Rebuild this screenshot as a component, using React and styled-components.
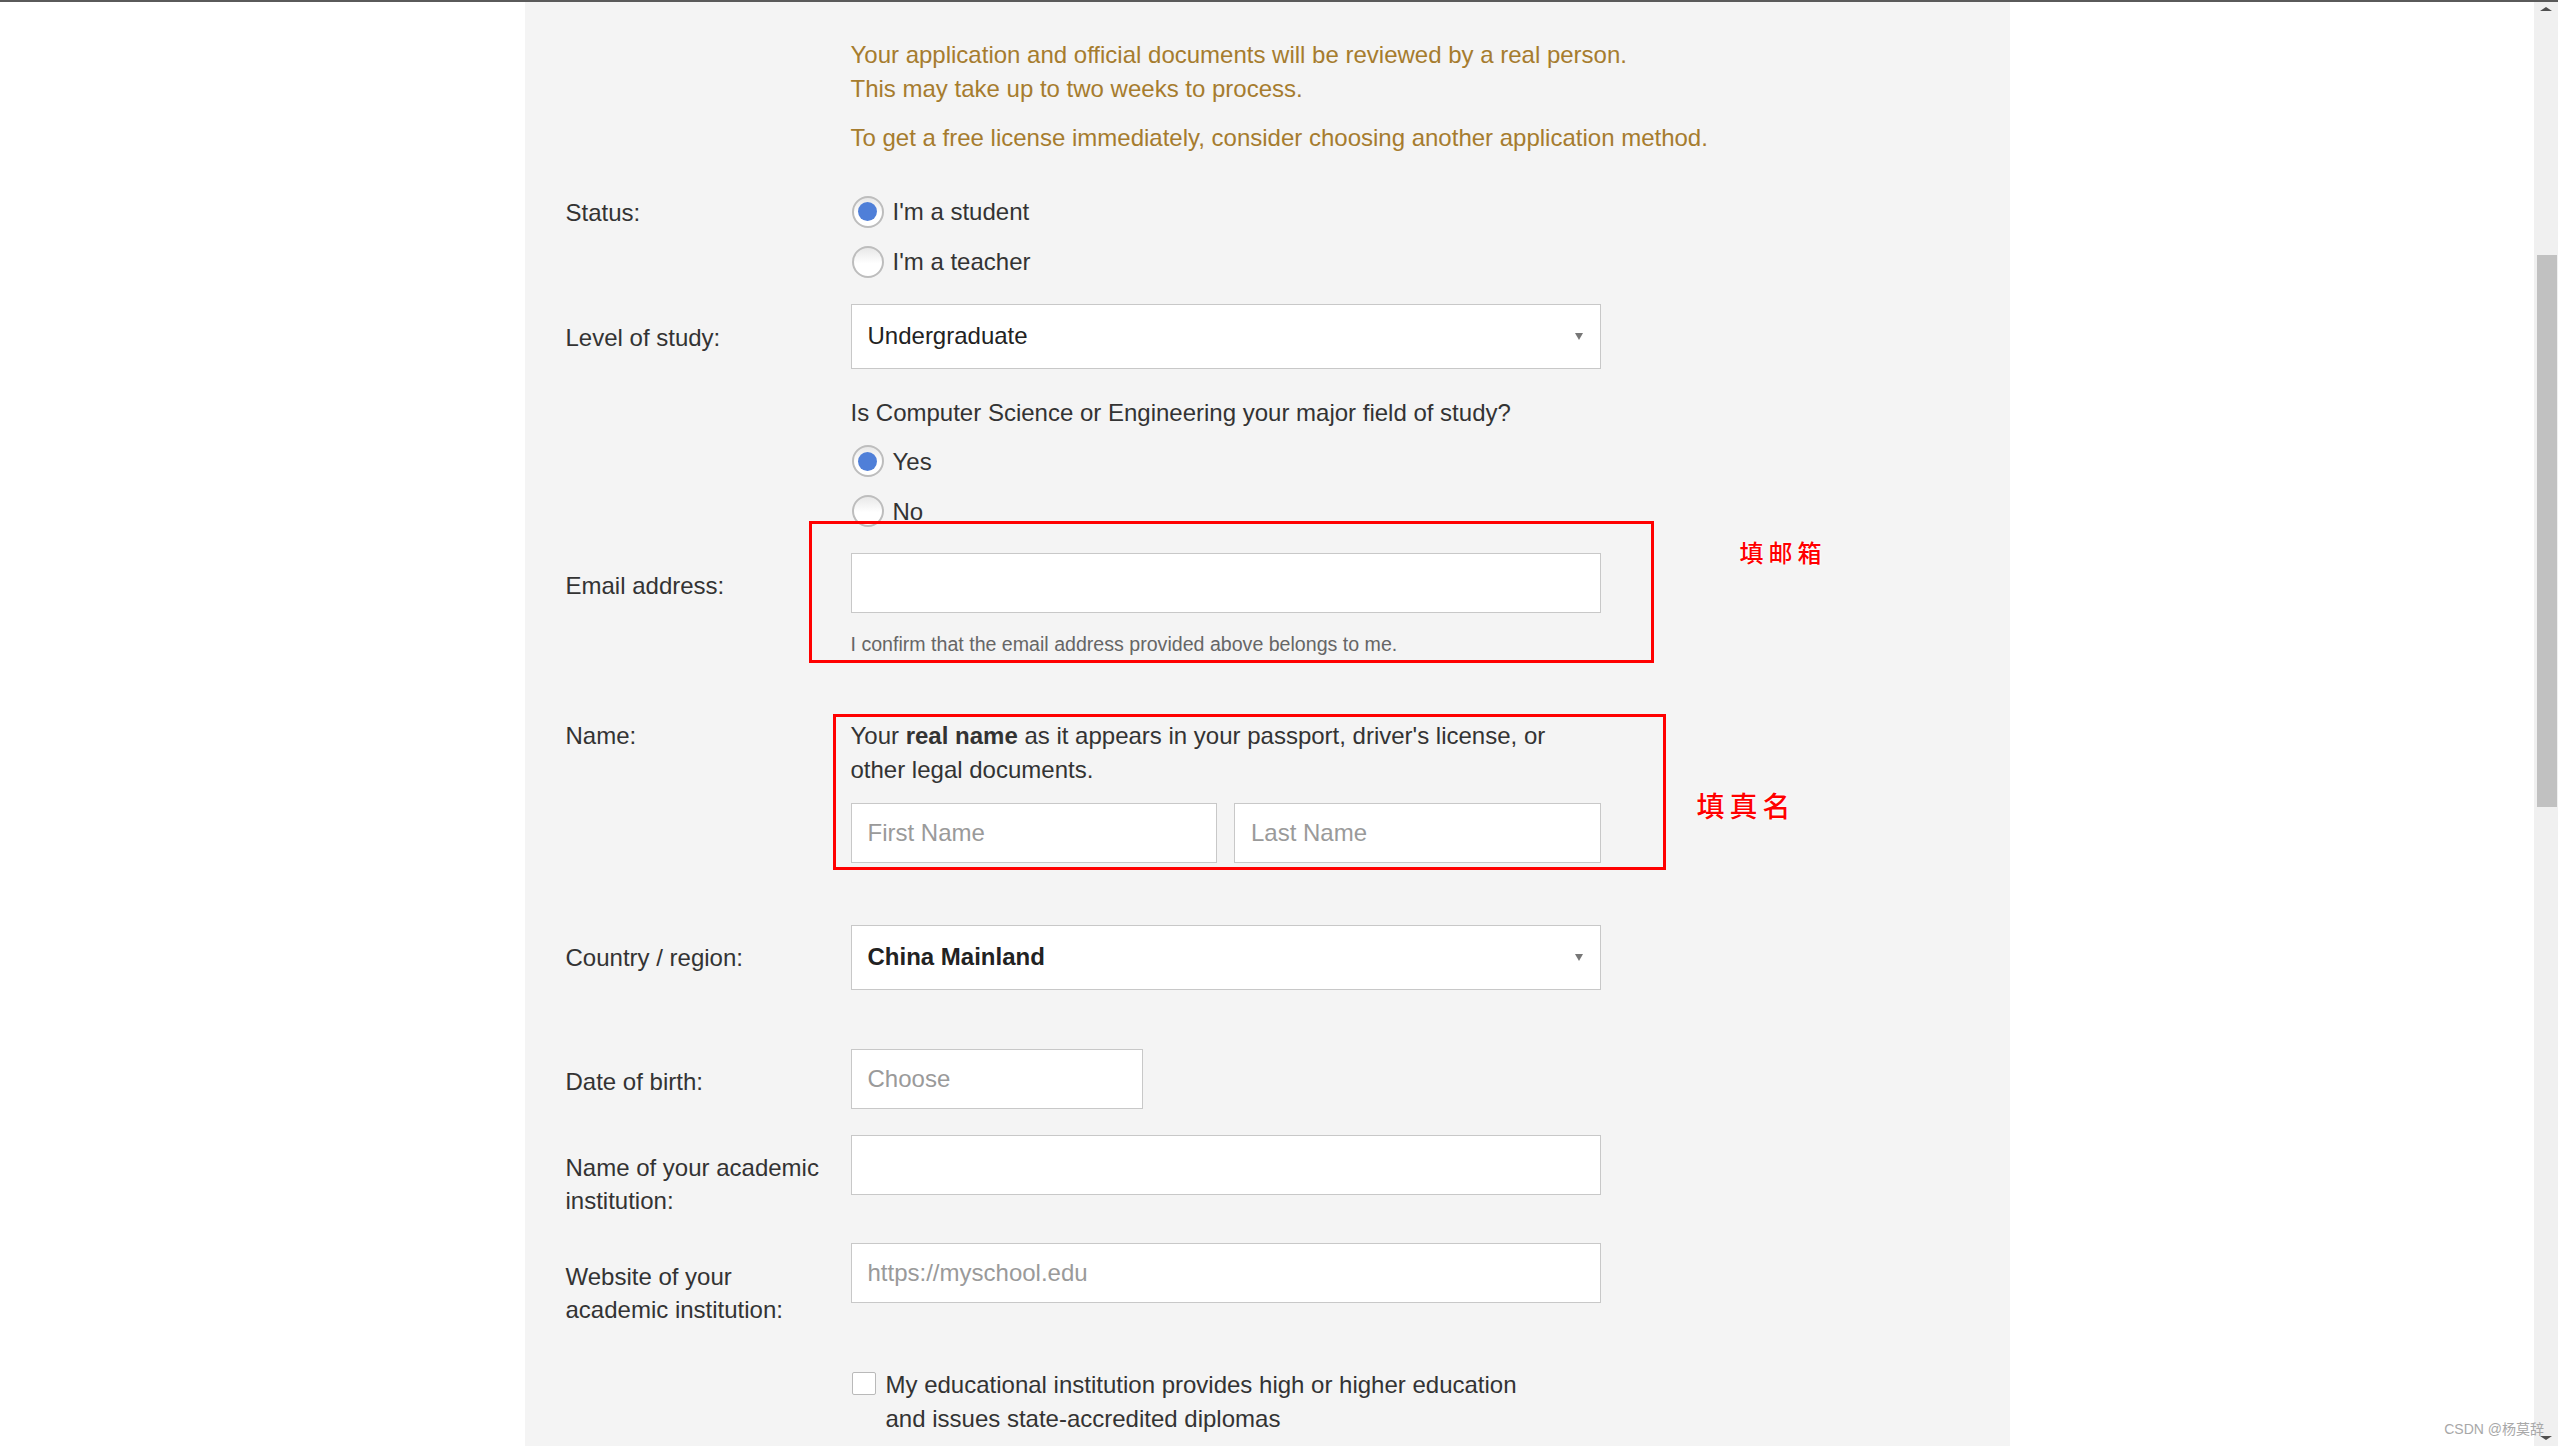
import React from "react";
import styled, { createGlobalStyle } from "styled-components";

const GlobalStyle = createGlobalStyle`
  html, body {
    margin: 0;
    padding: 0;
    height: 100%;
    overflow: hidden;
    background: #fff;
  }
  * {
    box-sizing: border-box;
  }
  #root {
    height: 100%;
  }
`;

const Window = styled.div`
  height: 100vh;
  display: flex;
  flex-direction: column;
  font-family: "Liberation Sans", Arial, sans-serif;
  position: relative;
`;

const TopLine = styled.div`
  height: 2px;
  background: #5a5a5a;
  flex-shrink: 0;
`;

const Viewport = styled.div`
  flex: 1;
  min-height: 0;
  display: flex;
`;

const Main = styled.div`
  flex: 1;
  overflow: hidden;
  background: #fff;
`;

const Panel = styled.div`
  width: 1485px;
  margin: 0 auto;
  min-height: 100%;
  background: #f4f4f4;
  padding: 36px 0 0 41px;
  font-size: 24px;
  line-height: 33.6px;
  color: #333;
`;

const Row = styled.div`
  display: grid;
  grid-template-columns: 265px 750px;
  column-gap: 20px;
  align-items: start;
  margin-top: ${(p) => p.$top || 0}px;
`;

const Label = styled.div`
  padding-top: ${(p) => p.$pad || 0}px;
  color: #333;
`;

const Field = styled.div`
  position: relative;
`;

const Notice = styled.p`
  margin: ${(p) => (p.$gap ? "16px" : "0")} 0 0;
  width: max-content;
  color: #a67c2e;
`;

const Option = styled.label`
  display: flex;
  align-items: center;
  gap: 9px;
  height: 32px;
  padding-left: 1px;
  margin-top: ${(p) => p.$top || 0}px;
  color: #333;
`;

const Radio = styled.span`
  width: 32px;
  height: 32px;
  border-radius: 50%;
  border: 2px solid #bdbdbd;
  background: linear-gradient(180deg, #e8e8e8 0%, #fff 55%);
  display: flex;
  align-items: center;
  justify-content: center;
  flex-shrink: 0;

  &::after {
    content: "";
    width: 19px;
    height: 19px;
    border-radius: 50%;
    background: #4f7fd8;
    display: ${(p) => (p.$checked ? "block" : "none")};
  }
`;

const Select = styled.div`
  height: 65px;
  background: #fff;
  border: 1px solid #c8c8c8;
  display: flex;
  align-items: center;
  justify-content: space-between;
  padding: 0 17px 0 16px;
  color: #222;
  font-weight: ${(p) => (p.$bold ? 700 : 400)};
`;

const Caret = styled.span`
  width: 0;
  height: 0;
  border-left: 4.5px solid transparent;
  border-right: 4.5px solid transparent;
  border-top: 7px solid #777;
`;

const Input = styled.input`
  display: block;
  width: ${(p) => p.$width || "100%"};
  height: 60px;
  background: #fff;
  border: 1px solid #c8c8c8;
  padding: 0 16px;
  font-family: inherit;
  font-size: 24px;
  color: #222;
  outline: none;

  &::placeholder {
    color: #9a9a9a;
  }
`;

const Question = styled.div`
  color: #333;
`;

const Hint = styled.div`
  margin-top: 17px;
  font-size: 19.6px;
  line-height: 28px;
  color: #666;
`;

const NameRow = styled.div`
  display: grid;
  grid-template-columns: 1fr 1fr;
  column-gap: 17px;
  margin-top: 16px;
`;

const RedBox = styled.div`
  position: absolute;
  top: ${(p) => p.$t}px;
  left: ${(p) => p.$l}px;
  right: ${(p) => p.$r}px;
  bottom: ${(p) => p.$b}px;
  border: 3px solid #ff0000;
  pointer-events: none;
`;

const Note = styled.div`
  position: absolute;
  left: ${(p) => p.$left}px;
  top: ${(p) => p.$y}px;
  font-family: "Noto Sans CJK SC", sans-serif;
  font-size: ${(p) => p.$size}px;
  font-weight: 500;
  letter-spacing: ${(p) => p.$spacing}px;
  line-height: 1;
  white-space: nowrap;
  color: #ff0000;
  text-shadow: 0 0 2px #fff, 0 0 3px #fff;
`;

const CheckRow = styled.label`
  display: flex;
  align-items: flex-start;
  gap: 10px;
  padding-left: 1px;
  color: #333;
`;

const CheckBox = styled.span`
  width: 24px;
  height: 23px;
  margin-top: 4px;
  flex-shrink: 0;
  background: #fff;
  border: 1px solid #b9b9b9;
  border-radius: 2px;
`;

const CheckText = styled.span`
  max-width: 660px;
`;

const Scrollbar = styled.div`
  width: 24px;
  background: #f0f0f0;
  display: flex;
  flex-direction: column;
  align-items: center;
  flex-shrink: 0;
`;

const ArrowUp = styled.span`
  margin-top: 5px;
  width: 0;
  height: 0;
  border-left: 6px solid transparent;
  border-right: 6px solid transparent;
  border-bottom: 4px solid #505050;
`;

const Thumb = styled.div`
  margin-top: 244px;
  width: 20px;
  margin-left: 2px;
  height: 552px;
  background: #c1c1c1;
`;

const ArrowDown = styled.span`
  margin-top: auto;
  margin-bottom: 6px;
  width: 0;
  height: 0;
  border-left: 6px solid transparent;
  border-right: 6px solid transparent;
  border-top: 4px solid #505050;
`;

const Watermark = styled.div`
  position: absolute;
  right: 14px;
  bottom: 8px;
  font-family: "Liberation Sans", "Noto Sans CJK SC", sans-serif;
  font-size: 14px;
  color: #a8a8a8;
`;

const App = () => {
  return (
    <Window>
      <GlobalStyle />
      <TopLine />
      <Viewport>
        <Main>
          <Panel>
            <Row>
              <div />
              <div>
                <Notice>
                  Your application and official documents will be reviewed by a
                  real person.
                  <br />
                  This may take up to two weeks to process.
                </Notice>
                <Notice $gap>
                  To get a free license immediately, consider choosing another
                  application method.
                </Notice>
              </div>
            </Row>

            <Row $top={41}>
              <Label>Status:</Label>
              <div>
                <Option>
                  <Radio $checked />
                  I'm a student
                </Option>
                <Option $top={18}>
                  <Radio />
                  I'm a teacher
                </Option>
              </div>
            </Row>

            <Row $top={26}>
              <Label $pad={17}>Level of study:</Label>
              <Select>
                Undergraduate
                <Caret />
              </Select>
            </Row>

            <Row $top={27}>
              <div />
              <div>
                <Question>
                  Is Computer Science or Engineering your major field of study?
                </Question>
                <Option $top={16}>
                  <Radio $checked />
                  Yes
                </Option>
                <Option $top={18}>
                  <Radio />
                  No
                </Option>
              </div>
            </Row>

            <Row $top={26}>
              <Label $pad={16}>Email address:</Label>
              <Field>
                <Input type="text" />
                <Hint>
                  I confirm that the email address provided above belongs to me.
                </Hint>
                <RedBox $t={-32} $l={-42} $r={-53} $b={-5} />
                <Note $left={889} $y={-13} $size={24} $spacing={5}>
                  填邮箱
                </Note>
              </Field>
            </Row>

            <Row $top={61}>
              <Label>Name:</Label>
              <Field>
                <div>
                  Your <b>real name</b> as it appears in your passport, driver's
                  license, or other legal documents.
                </div>
                <NameRow>
                  <Input type="text" placeholder="First Name" />
                  <Input type="text" placeholder="Last Name" />
                </NameRow>
                <RedBox $t={-5} $l={-18} $r={-65} $b={-7} />
                <Note $left={846} $y={72} $size={28} $spacing={5}>
                  填真名
                </Note>
              </Field>
            </Row>

            <Row $top={62}>
              <Label $pad={16}>Country / region:</Label>
              <Select $bold>
                China Mainland
                <Caret />
              </Select>
            </Row>

            <Row $top={59}>
              <Label $pad={16}>Date of birth:</Label>
              <Input type="text" placeholder="Choose" $width="292px" />
            </Row>

            <Row $top={26}>
              <Label $pad={16}>Name of your academic institution:</Label>
              <Input type="text" />
            </Row>

            <Row $top={25}>
              <Label $pad={17}>Website of your academic institution:</Label>
              <Input type="text" placeholder="https://myschool.edu" />
            </Row>

            <Row $top={41}>
              <div />
              <CheckRow>
                <CheckBox />
                <CheckText>
                  My educational institution provides high or higher education
                  and issues state-accredited diplomas
                </CheckText>
              </CheckRow>
            </Row>
          </Panel>
        </Main>
        <Scrollbar>
          <ArrowUp />
          <Thumb />
          <ArrowDown />
        </Scrollbar>
      </Viewport>
      <Watermark>CSDN @杨莫辞</Watermark>
    </Window>
  );
};

export default App;
